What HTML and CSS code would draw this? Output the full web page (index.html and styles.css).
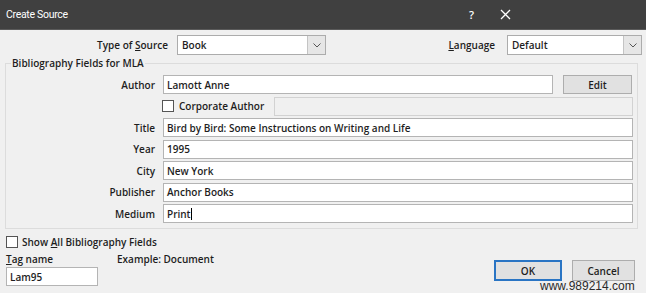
FILE: index.html
```html
<html lang="en">

<head>
    <meta charset="UTF-8">
    <title>Create Source</title>
    <link rel="stylesheet" href="styles.css">
</head>

<body>
    <div class="dialog">
        <div class="titlebar">
            <span class="title">Create Source</span>
            <span class="help">?</span>
            <svg class="close" width="11" height="11" viewBox="0 0 11 11">
                <path d="M1 1L10 10M10 1L1 10" stroke="#fff" stroke-width="1.3" fill="none"/>
            </svg>
        </div>

        <div class="source-row">
            <span class="type-lbl">Type of <u>S</u>ource</span>
            <div class="combo type-combo">
                <span class="combo-text">Book</span>
                <span class="drop">
                    <svg width="8" height="5" viewBox="0 0 8 5"><path d="M0.5 0.5L4 4L7.5 0.5" stroke="#555" fill="none"/></svg>
                </span>
            </div>
            <span class="lang-lbl"><u>L</u>anguage</span>
            <div class="combo lang-combo">
                <span class="combo-text">Default</span>
                <span class="drop">
                    <svg width="8" height="5" viewBox="0 0 8 5"><path d="M0.5 0.5L4 4L7.5 0.5" stroke="#555" fill="none"/></svg>
                </span>
            </div>
        </div>

        <fieldset class="fields">
            <legend>Bibliography Fields for MLA</legend>
            <div class="field-grid">
                <span class="lbl">Author</span>
                <div class="cell">
                    <div class="input grow">Lamott Anne</div>
                    <div class="btn edit">Edit</div>
                </div>

                <span class="lbl"></span>
                <div class="cell">
                    <span class="check"></span>
                    <span class="corp-lbl">Corporate Author</span>
                    <div class="input grow disabled"></div>
                </div>

                <span class="lbl">Title</span>
                <div class="input">Bird by Bird: Some Instructions on Writing and Life</div>

                <span class="lbl">Year</span>
                <div class="input">1995</div>

                <span class="lbl">City</span>
                <div class="input">New York</div>

                <span class="lbl">Publisher</span>
                <div class="input">Anchor Books</div>

                <span class="lbl">Medium</span>
                <div class="input">Print<span class="caret"></span></div>
            </div>
        </fieldset>

        <div class="bottom">
            <div class="options">
                <div class="show-all">
                    <span class="check"></span>
                    <span>Show <u>A</u>ll Bibliography Fields</span>
                </div>
                <div class="tag-row">
                    <div class="tag-col">
                        <span class="tag-lbl"><u>T</u>ag name</span>
                        <div class="input tag-input">Lam95</div>
                    </div>
                    <span class="example">Example: Document</span>
                </div>
            </div>
            <div class="buttons">
                <div class="btn ok">OK</div>
                <div class="btn cancel">Cancel</div>
            </div>
        </div>

        <div class="watermark">www.989214.com</div>
    </div>
</body>

</html>
```

FILE: styles.css
```css
body {
    margin: 0;
    background: #f0f0f0;
}

.dialog {
    position: relative;
    width: 646px;
    height: 293px;
    background: #f0f0f0;
    font-family: "Open Sans", "Noto Sans", sans-serif;
    font-size: 10px;
    font-weight: 600;
    color: #1e1e1e;
    overflow: hidden;
}

u {
    text-decoration: underline;
    text-underline-offset: 1px;
}

/* title bar */
.titlebar {
    height: 30px;
    background: #404040;
    color: #fff;
    display: flex;
    align-items: center;
    padding-left: 6px;
    border-bottom: 1px solid #5a5a5a;
    box-sizing: border-box;
}
.title {
    font-family: Roboto, sans-serif;
    font-weight: normal;
    font-size: 10.5px;
    letter-spacing: -0.3px;
    flex: 1;
}
.help {
    font-size: 11px;
    margin-right: 26px;
}
.close {
    margin-right: 135px;
}

/* type / language */
.source-row {
    display: flex;
    align-items: center;
    margin-top: 5px;
    height: 20px;
    padding-right: 4px;
}
.type-lbl {
    width: 177px;
    box-sizing: border-box;
    text-align: right;
    padding-right: 9px;
}
.lang-lbl {
    margin-left: auto;
    margin-right: 12px;
}
.combo {
    height: 20px;
    box-sizing: border-box;
    border: 1px solid #acacac;
    background: #fff;
    display: flex;
    align-items: center;
}
.type-combo {
    width: 149px;
}
.lang-combo {
    width: 135px;
}
.combo-text {
    flex: 1;
    padding-left: 4px;
}
.drop {
    width: 17px;
    height: 100%;
    background: #e6e6e6;
    border-left: 1px solid #c4c4c4;
    display: flex;
    align-items: center;
    justify-content: center;
}

/* bibliography group */
.fields {
    margin: 1px 8px 0 5px;
    padding: 5px 4px 5px 0;
    border: 1px solid #dcdcdc;
}
.fields legend {
    margin-left: 5px;
    padding: 0 1px;
    line-height: 14px;
}
.field-grid {
    display: grid;
    grid-template-columns: 157px 1fr;
    grid-auto-rows: 19px;
    row-gap: 2.5px;
    align-items: center;
}
.lbl {
    text-align: right;
    padding-right: 8px;
}
.cell {
    display: flex;
    align-items: center;
    height: 19px;
}
.input {
    height: 19px;
    box-sizing: border-box;
    border: 1px solid #b4b4b4;
    background: #fff;
    display: flex;
    align-items: center;
    padding-left: 3px;
}
.grow {
    flex: 1;
}
.input.disabled {
    background: #f0f0f0;
    border-color: #d2d2d2;
}
.caret {
    display: inline-block;
    width: 1px;
    height: 12px;
    background: #000;
}
.check {
    width: 12px;
    height: 12px;
    box-sizing: border-box;
    border: 1px solid #555;
    background: #fff;
}
.cell .check {
    margin-left: -1px;
}
.corp-lbl {
    margin-left: 5px;
    width: 95px;
}

/* buttons */
.btn {
    box-sizing: border-box;
    background: #e1e1e1;
    border: 1px solid #adadad;
    display: flex;
    align-items: center;
    justify-content: center;
}
.edit {
    width: 69px;
    height: 19px;
    margin-left: 10px;
    margin-right: 1px;
}

/* bottom */
.bottom {
    display: flex;
    padding: 0 11px 0 6px;
}
.show-all {
    display: flex;
    align-items: center;
    gap: 4px;
    margin-top: 7px;
    height: 12px;
}
.tag-row {
    display: flex;
    margin-top: 4px;
}
.tag-col {
    display: flex;
    flex-direction: column;
    width: 92px;
}
.tag-lbl {
    line-height: 14px;
}
.tag-input {
    margin-top: 1px;
    height: 19px;
}
.example {
    margin-left: 19px;
    line-height: 14px;
}
.buttons {
    margin-left: auto;
    align-self: flex-end;
    display: flex;
    gap: 10px;
    margin-bottom: 5px;
}
.ok {
    width: 68px;
    height: 21px;
    border: 2px solid #2a75c4;
}
.cancel {
    width: 63px;
    height: 21px;
}

.watermark {
    position: absolute;
    left: 540px;
    top: 280px;
    font-family: "Liberation Sans", Arial, sans-serif;
    font-weight: normal;
    font-size: 12px;
    color: #2a2a2a;
    line-height: 12px;
}
```
